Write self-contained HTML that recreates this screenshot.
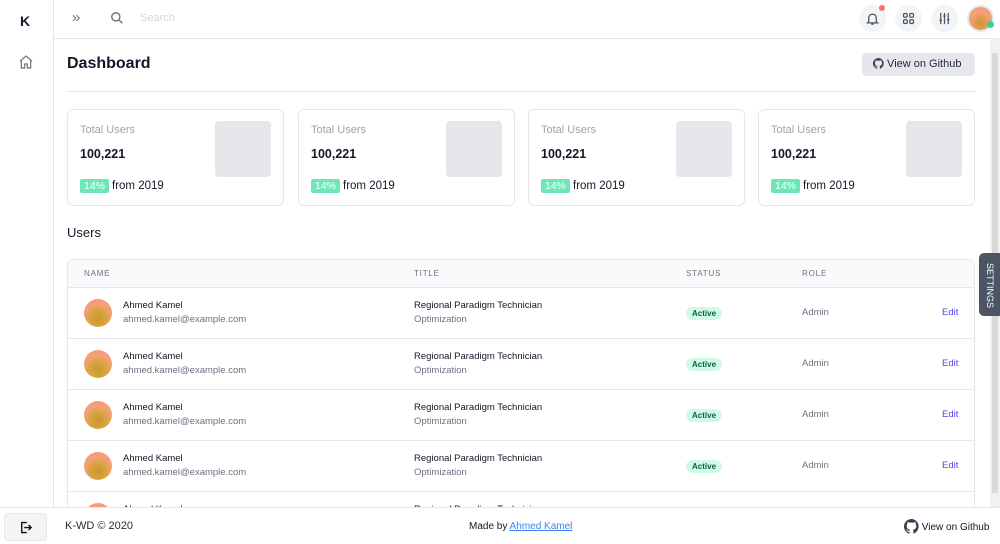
<!DOCTYPE html>
<html><head><style>
*{box-sizing:border-box;margin:0;padding:0}
body{width:1000px;height:543px;overflow:hidden;font-family:"Liberation Sans",sans-serif;background:#fff;position:relative;color:#111827}
.side{position:absolute;left:0;top:0;width:54px;height:507px;border-right:1px solid #e5e7eb}
.top{position:absolute;left:54px;top:0;right:0;height:39px;border-bottom:1px solid #e5e7eb}
.circ{position:absolute;top:5px;width:27px;height:27px;border-radius:50%;background:#f3f4f6}
.main{position:absolute;left:54px;top:39px;width:936px;height:468px;overflow:hidden}
.sb{position:absolute;left:990px;top:39px;width:10px;height:468px;background:#f1f1f1}
.card{position:absolute;top:70px;width:217px;height:97px;border:1px solid #e5e7eb;border-radius:6px}
.card .l{position:absolute;left:12px;top:14px;font-size:11px;color:#9ca3af}
.card .v{position:absolute;left:12px;top:37px;font-size:12.5px;font-weight:bold}
.card .p{position:absolute;left:12px;top:70px;font-size:11.5px}
.card .p span{background:#6ee7b7;color:#fff;padding:1px 4px;border-radius:2px;margin-right:3px;font-size:10.5px}
.card .sq{position:absolute;right:12px;top:11px;width:56px;height:56px;background:#e5e7eb;border-radius:4px}
.tbl{position:absolute;left:13px;top:220px;width:908px;height:300px;border:1px solid #e5e7eb;border-radius:6px;overflow:hidden}
.th{height:28px;background:#f9fafb;border-bottom:1px solid #e5e7eb;position:relative;font-size:8px;color:#6b7280;letter-spacing:.8px}
.th span,.row span{position:absolute}
.row{height:51px;border-bottom:1px solid #e5e7eb;position:relative;font-size:9.5px}
.av{position:absolute;left:16px;top:11px;width:28px;height:28px;border-radius:50%;background:radial-gradient(circle at 50% 70%,#c8962e 0,#d9a441 35%,#f6a07a 60%,#f7956f 100%)}
.g{color:#6b7280}
.badge{background:#d1fae5;color:#065f46;font-weight:bold;font-size:8px;padding:2px 6px;border-radius:8px}
.foot{position:absolute;left:0;top:507px;width:1000px;height:36px;border-top:1px solid #e5e7eb;font-size:11px}
</style></head><body>
<div class="side">
 <div style="position:absolute;left:20px;top:13px;font-size:14px;font-weight:bold">K</div>
 <svg style="position:absolute;left:18px;top:54px" width="16" height="16" viewBox="0 0 24 24" fill="none" stroke="#6b7280" stroke-width="1.8"><path d="M3 11l9-8 9 8M5 9v12h5v-6h4v6h5V9"/></svg>
</div>
<div class="top">
 <div style="position:absolute;left:18px;top:9px;font-size:15px;color:#6b7280">»</div>
 <svg style="position:absolute;left:56px;top:11px" width="14" height="14" viewBox="0 0 24 24" fill="none" stroke="#6b7280" stroke-width="2.4"><circle cx="10" cy="10" r="7"/><path d="M15 15l6 6"/></svg>
 <div style="position:absolute;left:86px;top:12px;font-size:11px;color:#d1d5db">Search</div>
 <div class="circ" style="left:805px"><svg style="margin:6px" width="15" height="15" viewBox="0 0 24 24" fill="none" stroke="#4b5563" stroke-width="2"><path d="M6 17V11a6 6 0 0112 0v6l2 2H4zM10 21h4"/></svg><div style="position:absolute;right:1px;top:0;width:6px;height:6px;border-radius:50%;background:#f87171"></div></div>
 <div class="circ" style="left:841px"><svg style="margin:6px" width="15" height="15" viewBox="0 0 24 24" fill="none" stroke="#4b5563" stroke-width="2"><rect x="4" y="4" width="6" height="6" rx="2"/><rect x="14" y="4" width="6" height="6" rx="2"/><rect x="4" y="14" width="6" height="6" rx="2"/><rect x="14" y="14" width="6" height="6" rx="2"/></svg></div>
 <div class="circ" style="left:877px"><svg style="margin:6px" width="15" height="15" viewBox="0 0 24 24" fill="none" stroke="#4b5563" stroke-width="2"><path d="M6 3v18M12 3v18M18 3v18M4 15h4M10 8h4M16 14h4"/></svg></div>
 <div class="circ" style="left:913px;background:radial-gradient(circle at 50% 70%,#c8962e 0,#f6a07a 55%,#f7956f 100%);border:2px solid #e5e7eb"><div style="position:absolute;right:-2px;bottom:2px;width:7px;height:7px;border-radius:50%;background:#34d399"></div></div>
</div>
<div class="main">
 <div style="position:absolute;left:13px;top:16px;font-size:16px;font-weight:bold">Dashboard</div>
 <div style="position:absolute;left:808px;top:14px;width:113px;height:23px;background:#e5e7eb;border-radius:4px;font-size:11px;line-height:23px;color:#1f2937;padding-left:11px">
  <svg style="vertical-align:-2px" width="11" height="11" viewBox="0 0 16 16" fill="#374151"><path d="M8 0a8 8 0 00-2.5 15.6c.4 0 .5-.2.5-.4v-1.5c-2.2.5-2.7-1-2.7-1-.4-.9-.9-1.2-.9-1.2-.7-.5.1-.5.1-.5.8.1 1.2.8 1.2.8.7 1.3 1.9.9 2.3.7.1-.5.3-.9.5-1.1-1.8-.2-3.600-.9-3.600-4 0-.9.3-1.6.8-2.1-.1-.2-.4-1 .1-2.1 0 0 .7-.2 2.2.8a7.5 7.5 0 014 0c1.5-1 2.2-.8 2.2-.8.4 1.1.2 1.9.1 2.1.5.6.8 1.3.8 2.1 0 3.1-1.9 3.7-3.6 3.9.3.3.5.8.5 1.5v2.2c0 .2.1.5.6.4A8 8 0 008 0z"/></svg> View on Github</div>
 <div style="position:absolute;left:13px;top:52px;width:908px;border-top:1px solid #e5e7eb"></div>
 <div class="card" style="left:13px"><div class="l">Total Users</div><div class="v">100,221</div><div class="p"><span>14%</span>from 2019</div><div class="sq"></div></div>
 <div class="card" style="left:244px"><div class="l">Total Users</div><div class="v">100,221</div><div class="p"><span>14%</span>from 2019</div><div class="sq"></div></div>
 <div class="card" style="left:474px"><div class="l">Total Users</div><div class="v">100,221</div><div class="p"><span>14%</span>from 2019</div><div class="sq"></div></div>
 <div class="card" style="left:704px"><div class="l">Total Users</div><div class="v">100,221</div><div class="p"><span>14%</span>from 2019</div><div class="sq"></div></div>
 <div style="position:absolute;left:13px;top:186px;font-size:13px">Users</div>
 <div class="tbl">
  <div class="th"><span style="left:16px;top:9px">NAME</span><span style="left:346px;top:9px">TITLE</span><span style="left:618px;top:9px">STATUS</span><span style="left:734px;top:9px">ROLE</span></div>
  <div class="row"><div class="av"></div><span style="left:55px;top:12px">Ahmed Kamel</span><span class="g" style="left:55px;top:26px">ahmed.kamel@example.com</span><span style="left:346px;top:12px">Regional Paradigm Technician</span><span class="g" style="left:346px;top:26px">Optimization</span><span class="badge" style="left:618px;top:19px">Active</span><span class="g" style="left:734px;top:19px">Admin</span><span style="left:874px;top:19px;color:#4f46e5">Edit</span></div>
  <div class="row"><div class="av"></div><span style="left:55px;top:12px">Ahmed Kamel</span><span class="g" style="left:55px;top:26px">ahmed.kamel@example.com</span><span style="left:346px;top:12px">Regional Paradigm Technician</span><span class="g" style="left:346px;top:26px">Optimization</span><span class="badge" style="left:618px;top:19px">Active</span><span class="g" style="left:734px;top:19px">Admin</span><span style="left:874px;top:19px;color:#4f46e5">Edit</span></div>
  <div class="row"><div class="av"></div><span style="left:55px;top:12px">Ahmed Kamel</span><span class="g" style="left:55px;top:26px">ahmed.kamel@example.com</span><span style="left:346px;top:12px">Regional Paradigm Technician</span><span class="g" style="left:346px;top:26px">Optimization</span><span class="badge" style="left:618px;top:19px">Active</span><span class="g" style="left:734px;top:19px">Admin</span><span style="left:874px;top:19px;color:#4f46e5">Edit</span></div>
  <div class="row"><div class="av"></div><span style="left:55px;top:12px">Ahmed Kamel</span><span class="g" style="left:55px;top:26px">ahmed.kamel@example.com</span><span style="left:346px;top:12px">Regional Paradigm Technician</span><span class="g" style="left:346px;top:26px">Optimization</span><span class="badge" style="left:618px;top:19px">Active</span><span class="g" style="left:734px;top:19px">Admin</span><span style="left:874px;top:19px;color:#4f46e5">Edit</span></div>
  <div class="row"><div class="av"></div><span style="left:55px;top:12px">Ahmed Kamel</span><span style="left:346px;top:12px">Regional Paradigm Technician</span></div>
 </div>
</div>
<div class="sb"><div style="position:absolute;left:2px;top:14px;width:6px;height:440px;background:#dadada"></div></div>
<div style="position:absolute;left:979px;top:253px;width:21px;height:63px;background:#4b5563;border-radius:5px 0 0 5px;color:#fff;font-size:9px"><div style="position:absolute;left:16px;top:10px;transform:rotate(90deg);transform-origin:0 0;white-space:nowrap">SETTINGS</div></div>
<div class="foot">
 <div style="position:absolute;left:4px;top:5px;width:43px;height:28px;background:#f3f4f6;border:1px solid #e5e7eb;border-radius:4px"><svg style="margin:6px 13px" width="15" height="15" viewBox="0 0 24 24" fill="none" stroke="#111" stroke-width="2.2"><path d="M14 4H6v16h8M10 12h11M17 8l4 4-4 4"/></svg></div>
 <div style="position:absolute;left:65px;top:12px;color:#1f2937">K-WD © 2020</div>
 <div style="position:absolute;left:469px;top:13px;font-size:10px">Made by <span style="color:#3b82f6;text-decoration:underline">Ahmed Kamel</span></div>
 <div style="position:absolute;left:904px;top:11px;font-size:10px"><svg style="vertical-align:-4px" width="15" height="15" viewBox="0 0 16 16" fill="#374151"><path d="M8 0a8 8 0 00-2.5 15.6c.4 0 .5-.2.5-.4v-1.5c-2.2.5-2.7-1-2.7-1-.4-.9-.9-1.2-.9-1.2-.7-.5.1-.5.1-.5.8.1 1.2.8 1.2.8.7 1.3 1.9.9 2.3.7.1-.5.3-.9.5-1.1-1.8-.2-3.6-.9-3.6-4 0-.9.3-1.6.8-2.1-.1-.2-.4-1 .1-2.1 0 0 .7-.2 2.2.8a7.5 7.5 0 014 0c1.5-1 2.2-.8 2.2-.8.4 1.1.2 1.9.1 2.1.5.6.8 1.3.8 2.1 0 3.1-1.9 3.7-3.6 3.9.3.3.5.8.5 1.5v2.2c0 .2.1.5.6.4A8 8 0 008 0z"/></svg> View on Github</div>
</div>
</body></html>
